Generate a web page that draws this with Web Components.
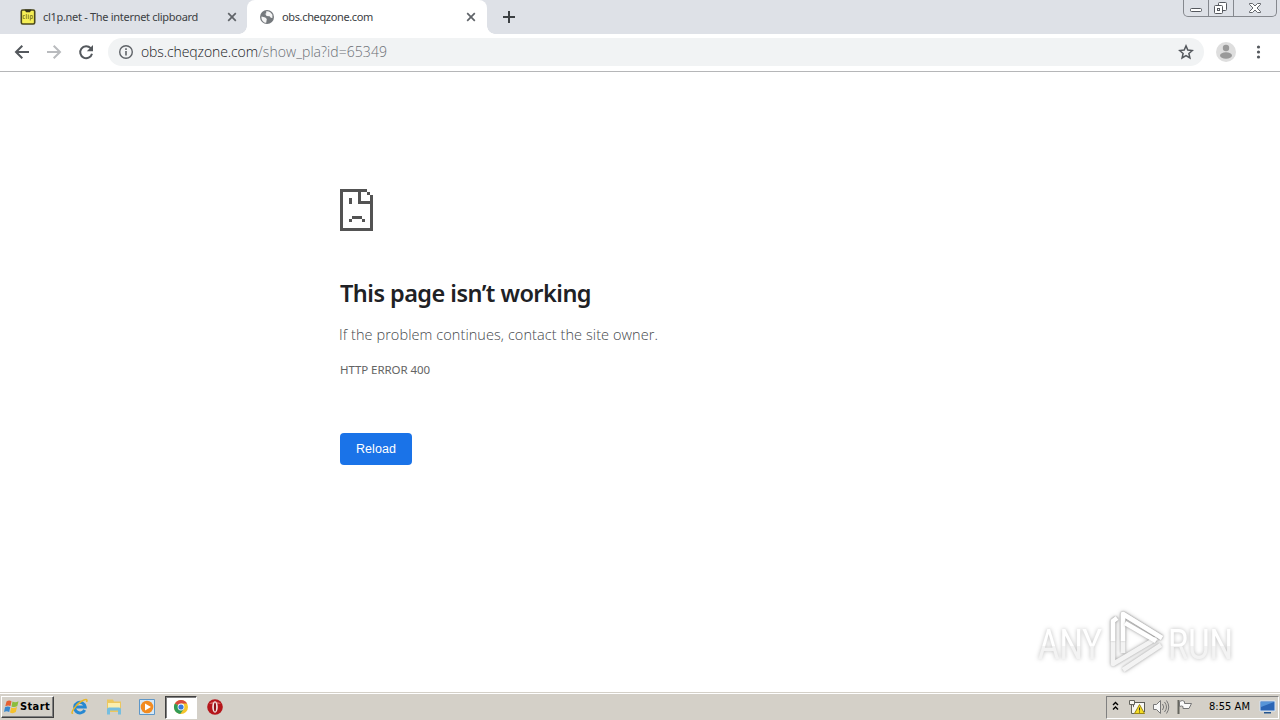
<!DOCTYPE html>
<html lang="en">
<head>
<meta charset="utf-8">
<title>obs.cheqzone.com</title>
<style>
html,body{margin:0;height:100%;overflow:hidden;background:#fff;font-family:"Noto Sans","Open Sans",sans-serif}
</style>
</head>
<body>
<desktop-screen></desktop-screen>
<script>
function define(name, html, connected) {
  const template = document.createElement('template');
  template.innerHTML = html;
  customElements.define(name, class extends HTMLElement {
    constructor() {
      super();
      this.attachShadow({mode: 'open'}).appendChild(template.content.cloneNode(true));
    }
    connectedCallback() { if (connected) connected.call(this); }
  });
}

/* A single line of text, tracked so that it fills the width given in pixels. */
define('ui-text', `<style>:host{display:block;white-space:pre;flex:none}span{display:inline-block}</style><span><slot></slot></span>`, function () {
  const span = this.shadowRoot.querySelector('span');
  const want = Number(this.getAttribute('width'));
  requestAnimationFrame(() => {
    const natural = span.getBoundingClientRect().width;
    if (want && natural) span.style.letterSpacing = (want - natural) / this.textContent.length + 'px';
  });
});

define('browser-tab', `<style>
:host{display:flex;align-items:center;box-sizing:border-box;height:34px;width:240px;padding:0 10px 0 12px;position:relative;font:11px/16px "Noto Sans",sans-serif;color:#3c4043}
:host([active]){background:#fff;border-radius:8px 8px 0 0;color:#3c4043}
:host([active])::before,:host([active])::after{content:"";position:absolute;bottom:0;width:8px;height:8px}
:host([active])::before{left:-8px;background:radial-gradient(circle at 0 0,transparent 7.5px,#fff 8px)}
:host([active])::after{right:-8px;background:radial-gradient(circle at 100% 0,transparent 7.5px,#fff 8px)}
.title{flex:1;margin-left:7px}
svg{flex:none}
</style>
<slot name="icon"></slot><div class="title"><slot></slot></div>
<svg width="12" height="12" viewBox="0 0 12 12"><path d="M2.2 2.2l7.6 7.6M9.8 2.2L2.2 9.8" stroke="#5f6368" stroke-width="1.7"/></svg>`);

define('window-controls', `<style>
:host{display:flex;box-sizing:border-box;width:94px;height:17px;border:1px solid #85888e;border-top:0;border-radius:0 0 5px 5px;background:#dee1e7;margin-right:3px}
svg{display:block}
</style>
<svg width="92" height="16" viewBox="0 0 92 16" fill="none" stroke="#55585e">
<path d="M24.5 0v16M49.5 0v16" stroke="#85888e"/>
<rect x="6.500" y="8.500" width="11" height="3" rx="1" fill="#fff"/>
<rect x="34.500" y="2.500" width="8" height="8" rx="1" fill="#fff"/><rect x="30.500" y="5.500" width="8" height="8" rx="1" fill="#fff"/><rect x="33.500" y="8.500" width="2" height="2"/>
<path d="M65.500 3.500h3l2.500 2.500 2.500-2.500h3v1l-3.500 3.500 3.500 3.500v1h-3l-2.500-2.500-2.500 2.500h-3v-1l3.500-3.500-3.500-3.500z" fill="#fff" stroke-width=".9"/>
</svg>`);

define('tab-strip', `<style>
:host{display:flex;height:34px;background:#dee1e7;align-items:flex-start;flex:none}
.first{width:239px;margin-left:8px;padding-right:9px}
.plus{margin:10px 0 0 15px}.gap{flex:1}svg{display:block}
</style>
<browser-tab class="first">
<svg slot="icon" width="16" height="16" viewBox="0 0 16 16"><rect x="1.300" y="1" width="13.400" height="14" rx="1.500" fill="#f5ee55" stroke="#4b481c" stroke-width="1.600"/><path d="M4.500 .5h7L10 3.200H6z" fill="#34321a"/><g fill="none" stroke="#8c872c"><path d="M4.800 6.500H3.200v3h1.600M6.300 5v5M8.300 5.500v4.500M10.300 6.500v5M10.300 6.500h2v3h-2"/></g></svg>
<ui-text width="155">cl1p.net - The internet clipboard</ui-text></browser-tab>
<browser-tab active>
<svg slot="icon" width="16" height="16" viewBox="0 0 16 16"><circle cx="8" cy="8" r="7" fill="#75797d"/><path d="M2.500 7.400l3.800 1.200 1.500 1.400-.6 3.800C4 13.400 2 10.500 2.500 7.400zM7.200 2.300c3-.4 5 1.200 6.200 3.500v3.300l-1.600-.4-1.200-1.500-3.200-.1-.4-1.600L5.500 5l1.700-.6z" fill="#f5f5f5"/></svg>
<ui-text width="91">obs.cheqzone.com</ui-text></browser-tab>
<svg class="plus" width="14" height="14" viewBox="0 0 14 14"><path d="M7 1v12M1 7h12" stroke="#3c4043" stroke-width="2"/></svg>
<div class="gap"></div><window-controls></window-controls>`);

define('tool-bar', `<style>
:host{display:flex;align-items:center;box-sizing:border-box;height:38px;background:#fff;border-bottom:1px solid #b5b6b8;padding:0 0 1px 14px;flex:none}
svg{display:block;flex:none}
.nav{display:flex;gap:16px;width:94px}
.omni{display:flex;align-items:center;height:28px;border-radius:14px;background:#f1f3f4;width:1096px;box-sizing:border-box;padding:0 10px;font:14px/20px "Open Sans",sans-serif;color:#202124;font-weight:300}
.omni ui-text:first-of-type{margin-left:7px}
.path{color:#6b6f74;flex:1}
.user{margin-left:11px}.dots{margin-left:14px}
</style>
<div class="nav">
<svg width="16" height="16" viewBox="0 0 16 16" fill="none" stroke="#54585d" stroke-width="2"><path d="M15 8H2.200M8.300 1.700L2 8l6.300 6.300"/></svg>
<svg width="16" height="16" viewBox="0 0 16 16" fill="none" stroke="#b9bbbe" stroke-width="2"><path d="M1 8h12.800M7.700 1.700L14 8l-6.300 6.300"/></svg>
<svg width="16" height="16" viewBox="0 0 16 16"><path d="M12.700 4.200A6 6 0 1 0 14 9.700" fill="none" stroke="#54585d" stroke-width="2"/><path d="M15 1v6.200H8.800z" fill="#54585d"/></svg>
</div>
<div class="omni">
<svg width="16" height="16" viewBox="0 0 16 16"><circle cx="8" cy="8" r="6.300" fill="none" stroke="#5f6368" stroke-width="1.400"/><path d="M8 7v4.500M8 4.300v1.600" stroke="#5f6368" stroke-width="1.600"/></svg>
<ui-text width="117">obs.cheqzone.com</ui-text><ui-text class="path" width="129">/show_pla?id=65349</ui-text>
<svg width="16" height="16" viewBox="0 0 16 16"><path d="M8 1.900l1.800 4.200 4.600.4-3.500 3 1 4.500L8 11.600 4.100 14l1-4.500-3.500-3 4.600-.4z" fill="none" stroke="#54585d" stroke-width="1.500"/></svg>
</div>
<svg class="user" width="22" height="22" viewBox="0 0 22 22"><circle cx="11" cy="11" r="10" fill="#dedede"/><circle cx="11" cy="7" r="3.200" fill="#999"/><ellipse cx="11" cy="14.500" rx="6" ry="3.200" fill="#999"/></svg>
<svg class="dots" width="16" height="16" viewBox="0 0 16 16" fill="#54585d"><circle cx="7.500" cy="3" r="1.600"/><circle cx="7.500" cy="8" r="1.600"/><circle cx="7.500" cy="13" r="1.600"/></svg>`);

define('reload-button', `<style>
:host{display:block;width:72px;margin-top:54px}
button{display:flex;justify-content:center;align-items:center;width:72px;height:32px;border:0;border-radius:4px;background:#1a73e8;color:#fff;padding:0;font:12.500px/16px "Liberation Sans",sans-serif;letter-spacing:.1px}
</style><button><ui-text><slot></slot></ui-text></button>`);

define('error-page', `<style>
:host{display:block;padding:117px 0 0 340px;flex:1;min-height:0;box-sizing:border-box;color:#646464;background:#fff}
svg{display:block}
h1{margin:46px 0 0;font:600 23.500px/32px "Noto Sans",sans-serif;color:#202124}
p{margin:15px 0 0 -1px;font:300 14.500px/22px "Open Sans",sans-serif;color:#45484c}
.code{margin:15px 0 0;font:11.500px/18px "Noto Sans",sans-serif;color:#646464}
</style>
<svg width="33" height="42" viewBox="0 0 33 42" shape-rendering="crispEdges"><path fill="#535353" d="M0 0h27v3H3v36h27V15H18V3h3v9h9V6h3v36H0zM27 3h3v3h-3zM9 9h3v6H9zM12 27h10v3H12zM9 30h3v3H9zM22 30h3v3h-3z"/></svg>
<h1><ui-text width="251">This page isn’t working</ui-text></h1>
<p><ui-text width="319">If the problem continues, contact the site owner.</ui-text></p>
<div class="code"><ui-text width="90">HTTP ERROR 400</ui-text></div>
<reload-button>Reload</reload-button>`);

define('run-watermark', `<style>
:host{position:absolute;left:1030px;top:603px;display:block;pointer-events:none}
svg{display:block;filter:drop-shadow(0 0 2px rgba(0,0,0,.26))}
text{font:43px "Roboto",sans-serif;fill:url(#fade)}
.soft{filter:drop-shadow(0 0 1px rgba(0,0,0,.2))}
</style>
<svg width="244" height="76" viewBox="0 0 244 76"><defs><linearGradient id="fade" x2="0" y2="1"><stop offset=".54" stop-color="#fff"/><stop offset=".55" stop-color="#f3f3f3"/></linearGradient></defs>
<text x="8" y="56" textLength="64" lengthAdjust="spacingAndGlyphs">ANY</text>
<text x="138" y="56" textLength="65" lengthAdjust="spacingAndGlyphs">RUN</text>
<g fill="none" stroke-width="4.500" stroke-linejoin="round">
<path class="soft" d="M93 67l38-25" stroke="#f3f3f3"/>
<path class="soft" d="M87 15l-4 3v43l44-26" stroke="#f3f3f3"/>
<path class="soft" d="M83 38V18l4-3" stroke="#fff"/>
<path class="soft" d="M93 50V11l39 24" stroke="#f3f3f3"/>
<path class="soft" d="M93 38V11l39 24" stroke="#fff"/>
<path class="soft" d="M95 20l31 18" stroke="#fff"/></g></svg>`);

define('start-button', `<style>
:host{display:flex;align-items:center;box-sizing:border-box;width:53px;height:22px;margin:0 16px 0 1px;padding-left:2px;background:#d4d0c8;border:1px solid;border-color:#fff #404040 #404040 #fff;box-shadow:inset -1px -1px #808080;color:#000;font:bold 11px/16px "DejaVu Sans Condensed","DejaVu Sans",sans-serif}
svg{flex:none}
</style>
<svg width="16" height="16" viewBox="0 0 16 16"><path d="M2.500 2.500Q5 .8 7.500 2.200L6.500 7Q4 5.800 1.300 7.300z" fill="#e66132"/><path d="M8.500 2.600Q11.500 4 14.500 2.200L13.300 7Q10.500 8.600 7.500 7.400z" fill="#8bbd3c"/><path d="M1 8.300Q3.500 7 6.300 8.100L5.200 13Q2.500 11.500 0 13z" fill="#3988ce"/><path d="M7.200 8.500Q10 9.800 13 8L11.800 13Q9 15 6 13.500z" fill="#f5c12d"/></svg>
<ui-text width="30">Start</ui-text>`);

define('system-tray', `<style>
:host{display:flex;align-items:center;box-sizing:border-box;width:173px;height:23px;margin-right:1px;border:1px solid;border-color:#808080 #fff #fff #808080;padding-left:4px;font:11px/16px "DejaVu Sans Condensed","DejaVu Sans",sans-serif;color:#000}
svg{display:block;flex:none}ui-text{margin-left:14px}
</style>
<svg width="84" height="20" viewBox="0 0 84 20"><path d="M2 8l2.500-2.500L7 8M2 12.500L4.500 10 7 12.500" fill="none" stroke="#000" stroke-width="1.400"/>
<rect x="22.500" y="5.500" width="11" height="9" fill="#f8f8f5" stroke="#5b5b56"/><path d="M18.500 3.500h5v4h-5zM20.500 7.500v9h5v-3" fill="#f5f5f0" stroke="#64645e"/><path d="M28.500 7.500l5 9h-10z" fill="#f5dc24" stroke="#9a8615"/><path d="M28.500 10.500v3M28.500 14.500v1" stroke="#333"/>
<path d="M42.500 7.500h3l4-4v13l-4-4h-3z" fill="#f7f7f7" stroke="#777"/><path d="M51.500 7q2.500 3 0 6M53.500 5q4 5 0 10M55.500 3.500q4.500 6.500 0 13" fill="none" stroke="#777"/>
<path d="M67.500 3v14" stroke="#66665f" stroke-width="2"/><path d="M68.500 4.500q3-2 5 0v2h7l-2.500 5h-6v-2q-1.500-1-3.500 0z" fill="#fafafa" stroke="#777"/></svg>
<ui-text width="41">8:55 AM</ui-text>
<svg style="margin-left:9px" width="18" height="18" viewBox="0 0 18 18"><path d="M1 3h15v10H1z" fill="#2b65b5" stroke="#d8e7f7"/><path d="M2 4h13L2 9z" fill="#5795d8"/><path d="M5 14h7v1.500H5z" fill="#24558f"/></svg>`);

define('task-bar', `<style>
:host{display:flex;align-items:center;box-sizing:border-box;height:27px;background:#d4d0c8;border-top:1px solid #fff;box-shadow:0 -1px #d4d0c8;flex:none;position:relative}
.icon{display:flex;justify-content:center;align-items:center;width:20px;margin-right:13.500px}
.chrome{box-sizing:border-box;width:32px;height:23px;background:#fff;border:1px solid;border-color:#404040 #fff #fff #404040;box-shadow:inset 1px 1px #808080;margin:0 8px 0 -6px}
.gap{flex:1}svg{display:block}
</style>
<start-button></start-button>
<div class="icon"><svg width="18" height="18" viewBox="0 0 18 18"><path d="M13.700 12A5.300 5.300 0 1 1 14.200 9H5" fill="none" stroke="#2688d2" stroke-width="3"/><path d="M2 15C-1 17 3 8 10 3.500 15 .5 17 1 15.500 4" fill="none" stroke="#e8b626" stroke-width="1.500"/></svg></div>
<div class="icon"><svg width="18" height="18" viewBox="0 0 18 18"><path d="M2 1.500h6l1 2h7V14H2z" fill="#ecc75f"/><path d="M3 5h12v6H3z" fill="#fbeeae"/><path d="M2 16.500v-5q0-2 2-2h10q2 0 2 2v5h-3v-4H5v4z" fill="#75bee0"/></svg></div>
<div class="icon"><svg width="18" height="18" viewBox="0 0 18 18"><path d="M1.500 1.500h15v15h-15z" fill="#d5e8f7" stroke="#5e97c8"/><circle cx="9" cy="9" r="6.300" fill="#f28b20"/><path d="M7 5.500l6 3.500-6 3.500z" fill="#fff"/></svg></div>
<div class="icon chrome"><svg width="16" height="16" viewBox="0 0 16 16"><circle cx="8" cy="8" r="7" fill="#f5c52c"/><path d="M8 8L1.900 4.500A7 7 0 0 1 14.100 4.500H8z" fill="#d94a3e"/><path d="M8 8L1.900 4.500A7 7 0 0 0 7.200 15L11 9.700z" fill="#329b56"/><circle cx="8" cy="8" r="3.400" fill="#fff"/><circle cx="8" cy="8" r="2.600" fill="#3979dd"/></svg></div>
<div class="icon"><svg width="18" height="18" viewBox="0 0 18 18"><circle cx="9" cy="9" r="7.800" fill="#b5161b"/><path d="M3 6a7 5 0 0 1 12 0" fill="#d65a57"/><ellipse cx="9" cy="9" rx="2.800" ry="5.800" fill="#f3e7e4"/><ellipse cx="9" cy="9" rx="1.100" ry="4.500" fill="#8f1015"/></svg></div>
<div class="gap"></div><system-tray></system-tray>`);

define('desktop-screen', `<style>:host{display:flex;flex-direction:column;width:1280px;height:720px;position:relative;overflow:hidden}</style>
<tab-strip></tab-strip><tool-bar></tool-bar><error-page></error-page><task-bar></task-bar><run-watermark></run-watermark>`);
</script>
</body>
</html>
